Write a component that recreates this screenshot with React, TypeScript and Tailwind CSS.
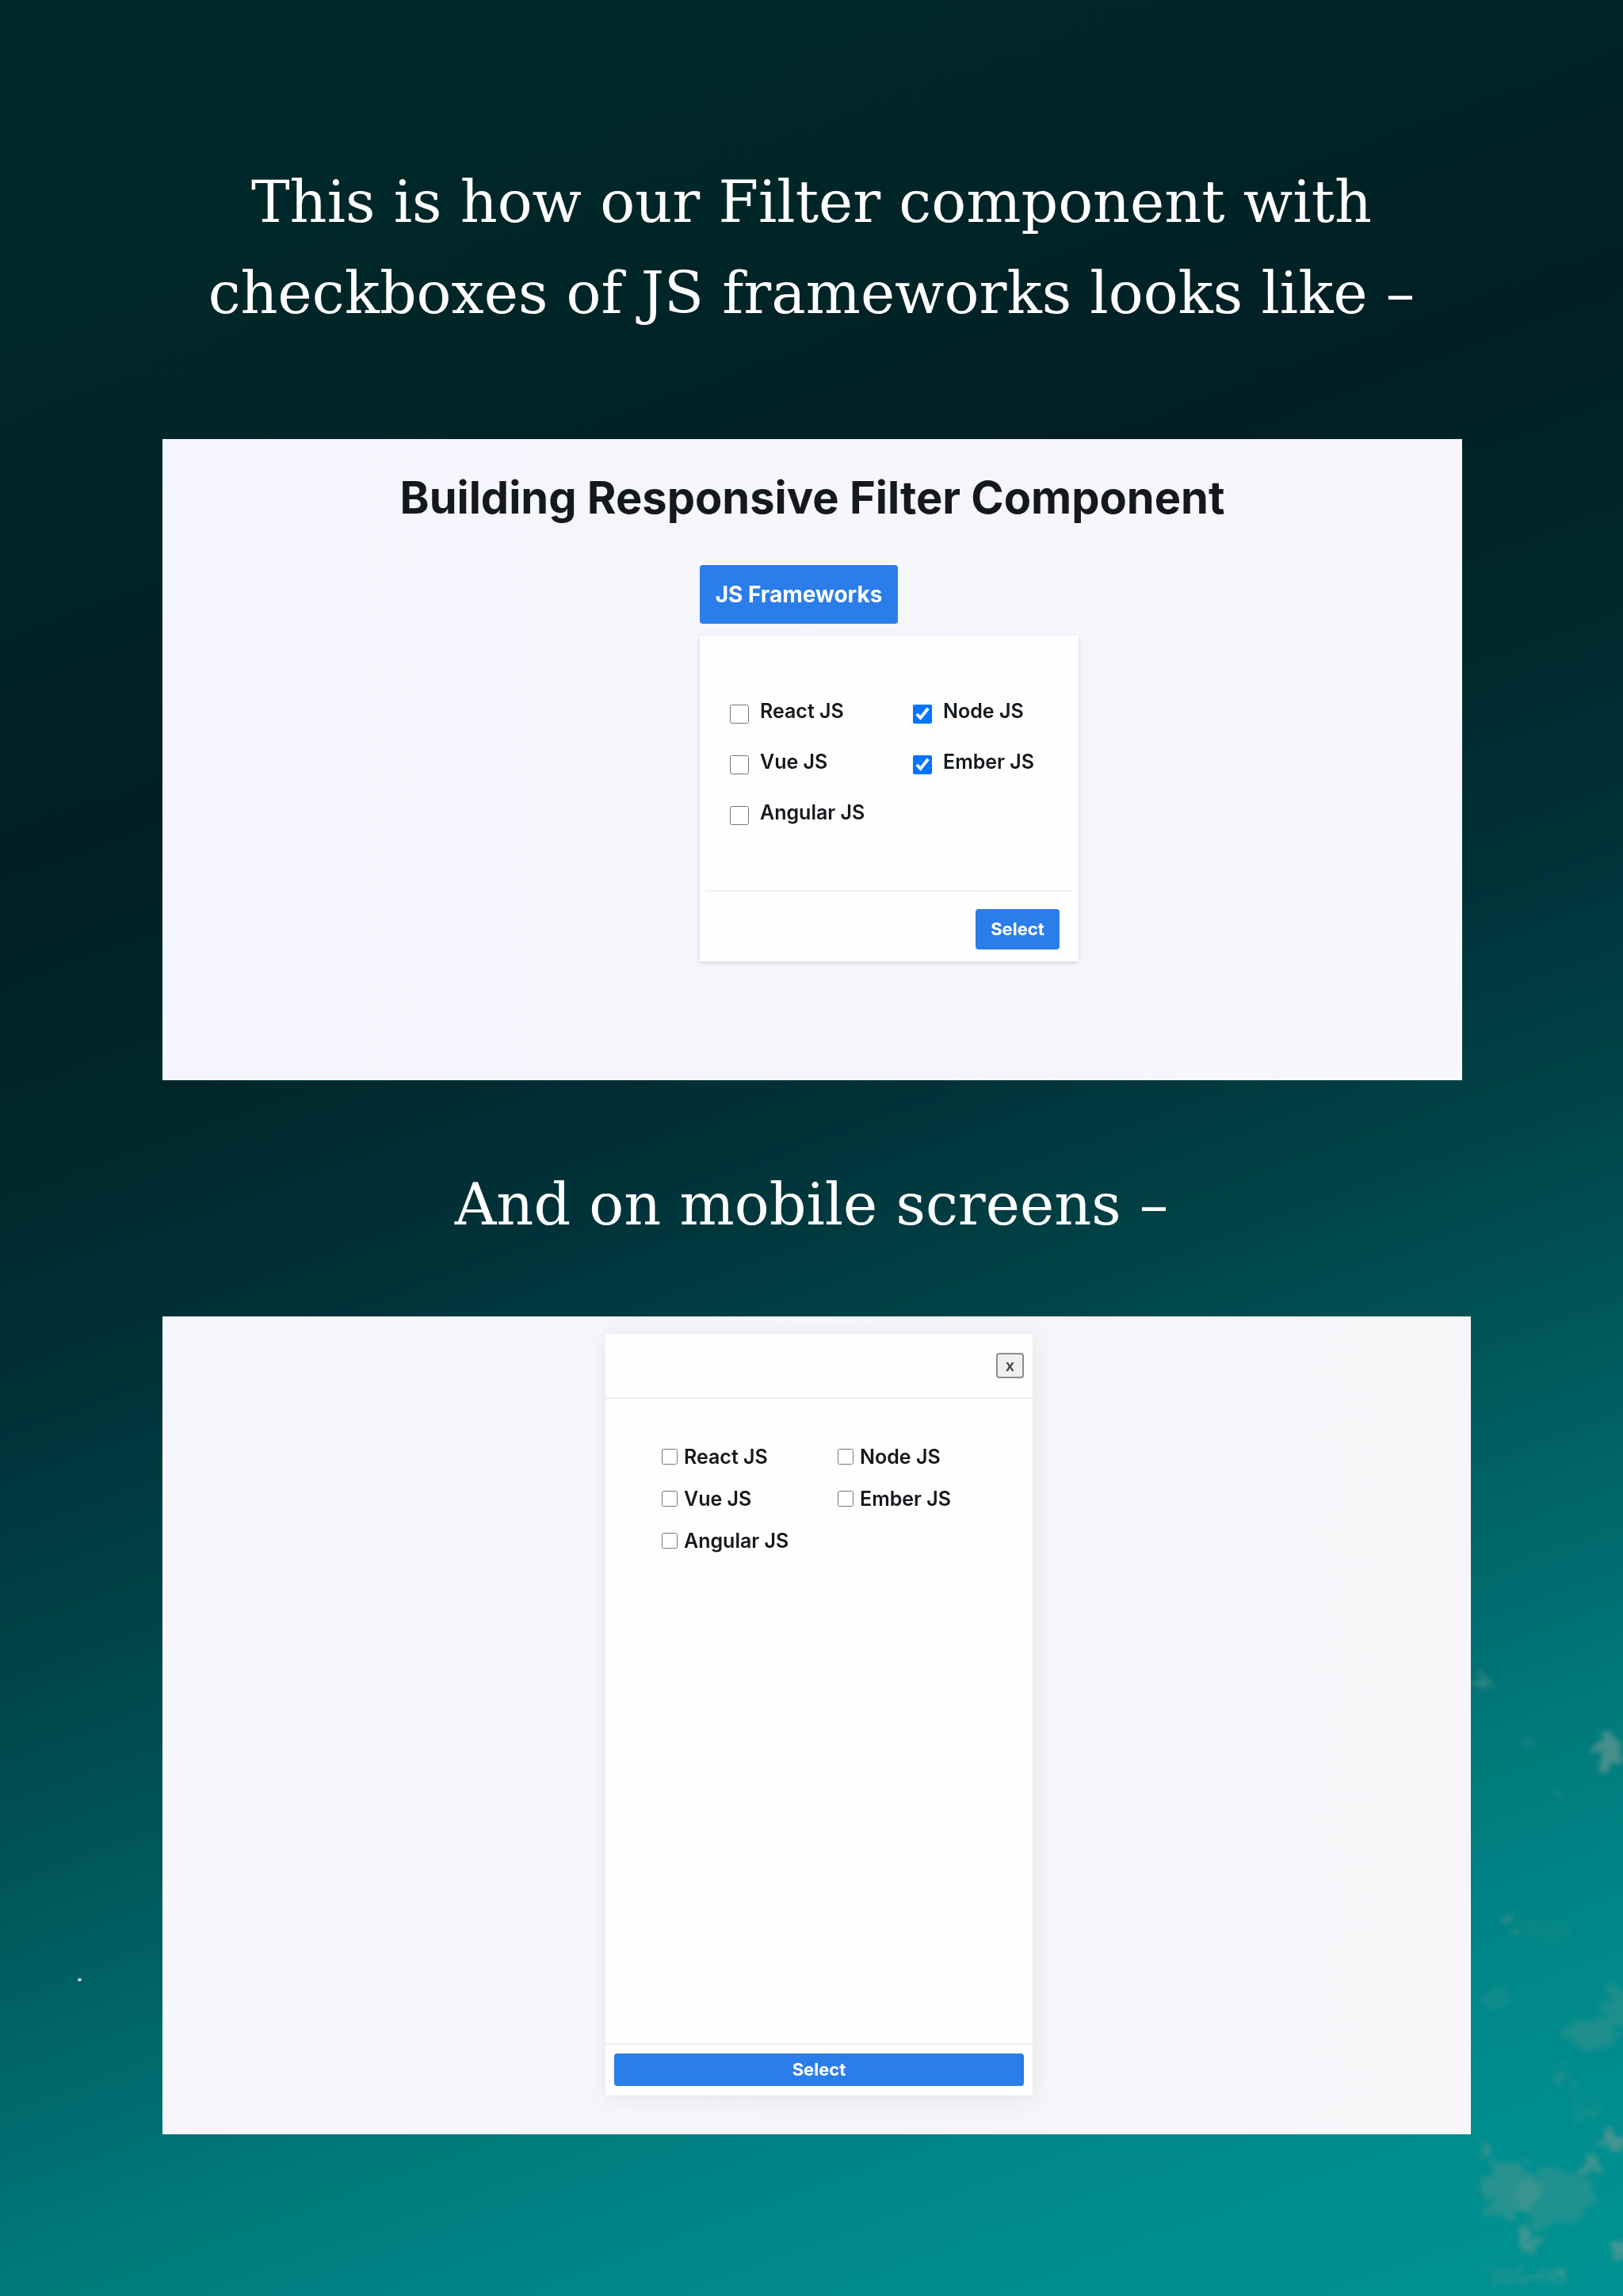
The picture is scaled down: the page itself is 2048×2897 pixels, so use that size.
import { useState } from "react";

const columns = [
  ["React JS", "Vue JS", "Angular JS"],
  ["Node JS", "Ember JS"],
];

function SeaFoam() {
  return (
    <svg
      aria-hidden="true"
      viewBox="0 0 268 897"
      className="pointer-events-none absolute right-0 bottom-0 h-[897px] w-[268px]"
    >
      <defs>
        <filter id="foam" x="-30%" y="-30%" width="160%" height="160%">
          <feTurbulence type="fractalNoise" baseFrequency="0.06" numOctaves="5" seed="11" />
          <feDisplacementMap in="SourceGraphic" scale="40" xChannelSelector="R" yChannelSelector="G" />
          <feGaussianBlur stdDeviation="3" />
        </filter>
      </defs>
      <g fill="#6f9a92" filter="url(#foam)">
        <ellipse cx="252" cy="209" rx="14" ry="26" opacity="0.65" />
        <ellipse cx="88" cy="124" rx="11" ry="6" opacity="0.4" />
        <ellipse cx="150" cy="198" rx="5" ry="9" opacity="0.4" />
        <ellipse cx="182" cy="261" rx="9" ry="3" opacity="0.5" />
        <ellipse cx="126" cy="429" rx="7" ry="5" opacity="0.5" />
        <ellipse cx="108" cy="520" rx="18" ry="17" opacity="0.13" />
        <ellipse cx="175" cy="437" rx="34" ry="12" opacity="0.08" />
        <ellipse cx="225" cy="566" rx="34" ry="20" opacity="0.28" />
        <ellipse cx="262" cy="536" rx="18" ry="32" opacity="0.25" />
        <ellipse cx="192" cy="620" rx="14" ry="10" opacity="0.25" />
        <ellipse cx="222" cy="665" rx="14" ry="14" opacity="0.15" />
        <ellipse cx="256" cy="698" rx="17" ry="12" opacity="0.6" />
        <ellipse cx="92" cy="715" rx="6" ry="12" opacity="0.6" />
        <ellipse cx="227" cy="732" rx="10" ry="12" opacity="0.55" />
        <ellipse cx="125" cy="760" rx="38" ry="34" opacity="0.35" />
        <ellipse cx="180" cy="772" rx="48" ry="36" opacity="0.28" />
        <ellipse cx="149" cy="830" rx="12" ry="16" opacity="0.55" />
        <ellipse cx="262" cy="839" rx="11" ry="13" opacity="0.6" />
        <ellipse cx="172" cy="871" rx="26" ry="5" opacity="0.55" />
        <ellipse cx="120" cy="871" rx="24" ry="14" opacity="0.15" />
      </g>
    </svg>
  );
}

interface FilterOptionsProps {
  prefix: string;
  checked: string[];
  onToggle: (name: string) => void;
  columnsClass: string;
  rowClass: string;
  boxClass: string;
}

function FilterOptions({ prefix, checked, onToggle, columnsClass, rowClass, boxClass }: FilterOptionsProps) {
  return (
    <div className={columnsClass}>
      {columns.map((names) => (
        <ul key={names[0]}>
          {names.map((name) => {
            const id = `${prefix}-${name.replace(" ", "-").toLowerCase()}`;
            return (
              <li key={name} className={rowClass}>
                <input
                  id={id}
                  type="checkbox"
                  checked={checked.includes(name)}
                  onChange={() => onToggle(name)}
                  className={boxClass}
                />
                <label htmlFor={id} className="text-[25px] leading-8 font-semibold whitespace-nowrap">
                  {name}
                </label>
              </li>
            );
          })}
        </ul>
      ))}
    </div>
  );
}

function useSelection(initial: string[]) {
  const [checked, setChecked] = useState(initial);
  const toggle = (name: string) =>
    setChecked((now) => (now.includes(name) ? now.filter((n) => n !== name) : [...now, name]));
  return { checked, toggle };
}

function DesktopDemo() {
  const { checked, toggle } = useSelection(["Node JS", "Ember JS"]);
  return (
    <section className="-mr-0.5 bg-linear-to-r from-[#f5f5fe] to-[#f6f6fb] pt-11 pb-[150px]">
      <h2 className="text-center text-[56px] leading-[60px] font-bold">Building Responsive Filter Component</h2>
      <div className="mt-[55px] ml-[calc(50%-142px)] w-[478px]">
        <button type="button" className="h-[74px] w-[250px] rounded-sm bg-[#2b7de9] text-[28px] font-bold whitespace-nowrap text-white">
          JS Frameworks
        </button>
        <div className="mt-[15px] bg-[#fdfefe] px-2 shadow-[0_2px_6px_rgba(0,0,0,0.14)]">
          <FilterOptions
            prefix="desktop"
            checked={checked}
            onToggle={toggle}
            columnsClass="grid h-[321px] grid-cols-[231px_1fr] pt-[79px] pl-[30px]"
            rowClass="flex h-16 items-start gap-[14px]"
            boxClass="mt-2 size-6 shrink-0"
          />
          <div className="flex justify-end border-t-2 border-[#eff0f3] pt-[22px] pr-4 pb-[15px]">
            <button type="button" className="h-[51px] w-[106px] rounded-sm bg-[#2b7de9] text-[22px] font-bold text-white">
              Select
            </button>
          </div>
        </div>
      </div>
    </section>
  );
}

function MobileDemo() {
  const { checked, toggle } = useSelection([]);
  return (
    <section className="-mr-[13px] bg-linear-to-r from-[#f6f6fc] to-[#f6f6f9] pt-[21px] pb-12 pl-[6px]">
      <div className="mx-auto w-[541px] border border-[#ebecee] bg-[#fefefe] shadow-[0_4px_30px_rgba(0,0,0,0.07)]">
        <div className="flex h-[82px] items-center justify-end border-b-2 border-[#ebecee] pr-[11px]">
          <button
            type="button"
            aria-label="Close"
            className="flex h-8 w-[35px] items-center justify-center rounded-sm border-2 border-[#8c8c90] bg-[#efeff1] text-[20px] font-semibold text-[#444]"
          >
            x
          </button>
        </div>
        <FilterOptions
          prefix="mobile"
          checked={checked}
          onToggle={toggle}
          columnsClass="grid h-[813px] grid-cols-[222px_1fr] pt-[57px] pl-[71px]"
          rowClass="flex h-[53px] items-start gap-2"
          boxClass="mt-[6px] size-5 shrink-0"
        />
        <div className="border-t-2 border-[#eff0f2] px-[11px] pt-[11px] pb-3">
          <button type="button" className="h-[41px] w-full rounded-sm bg-[#2b7de9] text-[22px] font-bold text-white">
            Select
          </button>
        </div>
      </div>
    </section>
  );
}

export default function App() {
  return (
    <div className="relative min-h-screen overflow-hidden bg-[linear-gradient(160deg,#00292b_0%,#002628_16%,#001f24_30%,#002a2e_42%,#003238_49%,#004448_58%,#00575b_66%,#00696c_73%,#00797b_79%,#00898a_88%,#009393_100%)] font-['Inter',sans-serif] text-[#15181c]">
      <SeaFoam />
      <div aria-hidden="true" className="absolute bottom-[397px] left-[98px] h-1 w-[5px] rounded-full bg-[#c4d4c8]" />
      <main className="relative px-[10%] pt-[197px] pb-[203px]">
        <h1 className="-mx-16 text-center font-['DejaVu_Serif',serif] text-[73px] leading-[115px] text-white">
          This is how our Filter component with
          <br />
          checkboxes of JS frameworks looks like –
        </h1>
        <div className="mt-[127px]">
          <DesktopDemo />
        </div>
        <p className="pt-[99px] pb-[84px] text-center font-['DejaVu_Serif',serif] text-[73px] leading-[115px] text-white">
          And on mobile screens –
        </p>
        <MobileDemo />
      </main>
    </div>
  );
}
